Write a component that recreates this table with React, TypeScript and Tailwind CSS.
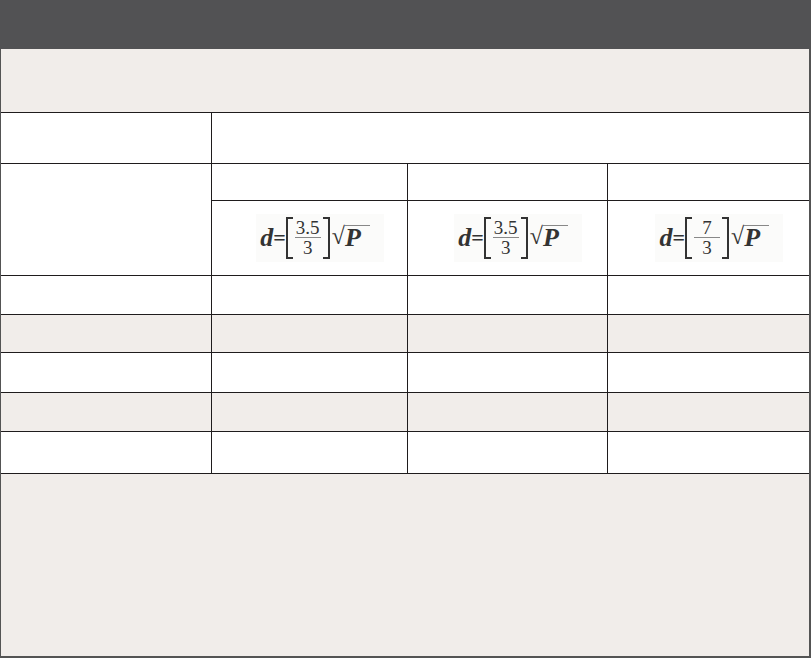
const serif = { fontFamily: '"Liberation Serif", "Times New Roman", serif' }

function Formula({ num }: { num: string }) {
  return (
    <div
      className="inline-flex items-center text-[#333] bg-[#fbfbfa] pl-[4px] pr-[14px] py-[3px] ml-[22px]"
      style={serif}
    >
      <span className="italic font-bold text-[26px] leading-none">d</span>
      <span className="text-[22px] leading-none font-bold">=</span>
      <div className="flex items-stretch h-[42px]">
        <div className="w-[7px] border-l-2 border-t-2 border-b-2 border-[#333]" />
        <div className="flex flex-col items-center justify-center px-[2px]">
          <span className="text-[19px] leading-[19px]">{num}</span>
          <span className="w-[26px] h-px bg-[#888]" />
          <span className="text-[19px] leading-[20px]">3</span>
        </div>
        <div className="w-[7px] border-r-2 border-t-2 border-b-2 border-[#333]" />
      </div>
      <div className="flex items-start ml-[2px] -mt-[4px]">
        <span className="text-[24px] leading-[26px]">√</span>
        <span className="italic font-bold text-[26px] leading-[24px] border-t border-[#888] pr-[9px] mt-[2px]">
          P
        </span>
      </div>
    </div>
  )
}

const cell = 'border border-[#1f1c1d] p-0'

export default function App() {
  const rows = [
    { bg: 'bg-white', h: 'h-[39px]' },
    { bg: 'bg-[#f1edea]', h: 'h-[38px]' },
    { bg: 'bg-white', h: 'h-[40px]' },
    { bg: 'bg-[#f1edea]', h: 'h-[39px]' },
    { bg: 'bg-white', h: 'h-[42px]' },
  ]

  return (
    <div className="w-[811px] h-[658px] flex flex-col bg-[#f1edea]">
      <div className="h-[49px] bg-[#525254] shrink-0" />
      <div className="flex-1 flex flex-col border-l border-r-2 border-b-2 border-[#545454]">
        <div className="h-[63px] shrink-0" />
        <table className="w-full border-collapse table-fixed">
          <colgroup>
            <col className="w-[210px]" />
            <col className="w-[196px]" />
            <col className="w-[200px]" />
            <col />
          </colgroup>
          <tbody>
            <tr className="h-[51px] bg-white">
              <td className={`${cell} border-l-0`} />
              <td className={`${cell} border-r-0`} colSpan={3} />
            </tr>
            <tr className="h-[37px] bg-white">
              <td className={`${cell} border-l-0`} rowSpan={2} />
              <td className={cell} />
              <td className={cell} />
              <td className={`${cell} border-r-0`} />
            </tr>
            <tr className="h-[75px] bg-white">
              <td className={`${cell} text-center`}>
                <Formula num="3.5" />
              </td>
              <td className={`${cell} text-center`}>
                <Formula num="3.5" />
              </td>
              <td className={`${cell} border-r-0 text-center`}>
                <Formula num="7" />
              </td>
            </tr>
            {rows.map((r, i) => (
              <tr key={i} className={`${r.h} ${r.bg}`}>
                <td className={`${cell} border-l-0`} />
                <td className={cell} />
                <td className={cell} />
                <td className={`${cell} border-r-0`} />
              </tr>
            ))}
          </tbody>
        </table>
        <div className="flex-1" />
      </div>
    </div>
  )
}
